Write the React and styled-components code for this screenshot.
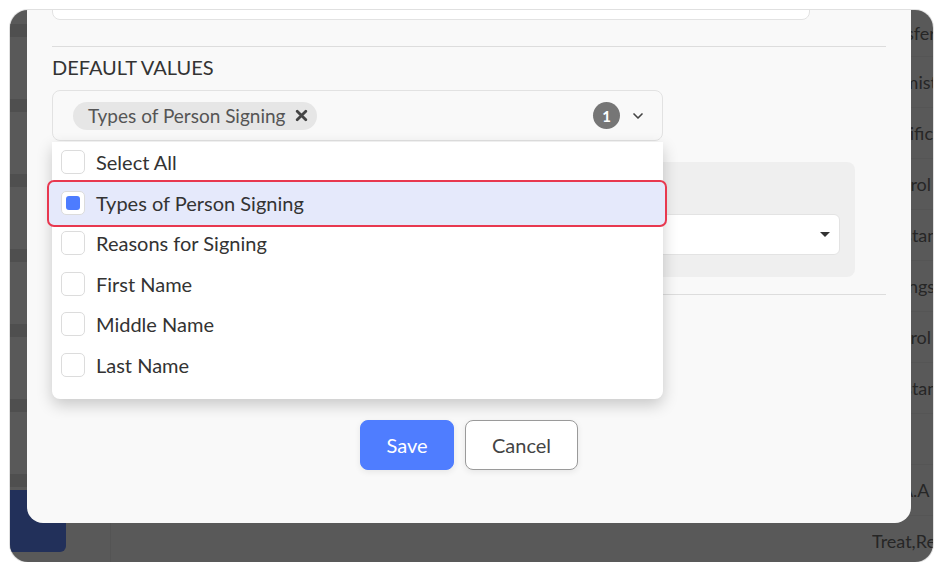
import React from 'react';
import styled, { createGlobalStyle } from 'styled-components';
import { ChevronDown } from 'lucide-react';

const GlobalStyle = createGlobalStyle`
  body {
    margin: 0;
    background: #ffffff;
    font-family: Lato, "Open Sans", sans-serif;
  }
`;

const Frame = styled.div`
  position: relative;
  box-sizing: border-box;
  width: 923px;
  height: 552px;
  margin: 10px 0 0 10px;
  border-radius: 18px;
  background: #595959;
  box-shadow: 0 0 0 1px #e0e0e0;
  overflow: hidden;
  display: grid;
  grid-template-columns: 56px 1fr;
`;

const Sidebar = styled.div`
  display: flex;
  flex-direction: column;
  padding-top: 14px;
`;

const SideRow = styled.div`
  box-sizing: border-box;
  height: ${({ $h }) => $h}px;
  border-top: 13px solid #4f4f4f;
  flex-shrink: 0;
`;

const SideButton = styled.div`
  height: 62px;
  margin-bottom: 15px;
  margin-top: auto;
  background: #22305a;
  border-radius: 0 0 6px 0;
`;

const Table = styled.div`
  display: flex;
  flex-direction: column;
  border-left: 1px solid #545454;
  margin-left: 44px;
`;

const TableRow = styled.div`
  box-sizing: border-box;
  height: ${({ $h }) => $h}px;
  flex-shrink: 0;
  display: grid;
  grid-template-columns: 1fr 61px;
  align-items: center;
  border-bottom: 1px solid #555555;
`;

const Cell = styled.div`
  font-size: 18px;
  color: #262626;
  white-space: nowrap;
  overflow: hidden;
`;

const Modal = styled.div`
  position: absolute;
  left: 17px;
  top: -40px;
  width: 884px;
  box-sizing: border-box;
  padding: 9px 25px 53px;
  background: #f9f9f9;
  border-radius: 16px;
  color: #333;
`;

const TopInput = styled.div`
  width: 758px;
  height: 41px;
  box-sizing: border-box;
  background: #ffffff;
  border: 1px solid #e2e2e2;
  border-radius: 8px;
`;

const Divider = styled.hr`
  margin: ${({ $top }) => $top}px 0 0;
  border: none;
  border-top: 1px solid #dddddd;
`;

const Label = styled.div`
  margin-top: 8px;
  font-size: 20px;
  line-height: 24px;
  color: #333;
  text-transform: uppercase;
`;

const Field = styled.div`
  position: relative;
  width: 611px;
  margin-top: 11px;
  z-index: 2;
`;

const Control = styled.div`
  height: 51px;
  box-sizing: border-box;
  border: 1px solid #e2e2e2;
  border-radius: 8px;
  background: #f9f9f9;
  display: flex;
  align-items: center;
  padding: 0 16px 0 20px;
`;

const Chip = styled.div`
  height: 28px;
  display: flex;
  align-items: center;
  gap: 10px;
  padding: 0 9px 0 15px;
  border-radius: 14px;
  background: #e6e6e6;
  font-size: 19px;
  color: #555;
`;

const Badge = styled.div`
  margin-left: auto;
  width: 27px;
  height: 27px;
  border-radius: 50%;
  background: #767676;
  color: #fff;
  font-size: 15px;
  font-weight: 700;
  display: grid;
  place-items: center;
`;

const Chevron = styled(ChevronDown)`
  margin-left: 10px;
  color: #444;
`;

const Menu = styled.div`
  position: absolute;
  left: 0;
  right: 0;
  top: calc(100% + 1px);
  background: #ffffff;
  border-radius: 0 0 8px 8px;
  box-shadow: 0 6px 16px rgba(0, 0, 0, 0.2);
  padding-bottom: 14px;
`;

const Option = styled.div`
  position: relative;
  height: 40.5px;
  display: flex;
  align-items: center;
  gap: 11px;
  padding-left: 9px;
  font-size: 20px;
  color: #333;

  ${({ $active }) =>
    $active &&
    `
    &::before {
      content: '';
      position: absolute;
      top: -3px;
      bottom: -4px;
      left: -5px;
      right: -4px;
      background: #e5e9fb;
      border: 2px solid #e8384f;
      border-radius: 7px;
    }
  `}
`;

const Box = styled.span`
  position: relative;
  width: 24px;
  height: 24px;
  box-sizing: border-box;
  border: 1px solid #dcdcdc;
  border-radius: 5px;
  background: #fff;
  display: grid;
  place-items: center;

  &::after {
    content: '';
    width: 14px;
    height: 14px;
    border-radius: 3px;
    background: ${({ $checked }) => ($checked ? '#4d7cff' : 'transparent')};
  }
`;

const OptionText = styled.span`
  position: relative;
`;

const Panel = styled.div`
  width: 803px;
  box-sizing: border-box;
  margin-top: 21px;
  padding: 14px 15px 22px;
  background: #efefef;
  border-radius: 8px;
`;

const PanelLabel = styled.div`
  height: 24px;
  margin-bottom: 14px;
  font-size: 18px;
  color: #555;
`;

const Select = styled.div`
  height: 41px;
  box-sizing: border-box;
  background: #fff;
  border: 1px solid #e3e3e3;
  border-radius: 6px;
  display: flex;
  align-items: center;
  justify-content: flex-end;
  padding-right: 9px;
`;

const Caret = styled.span`
  width: 0;
  height: 0;
  border-left: 5px solid transparent;
  border-right: 5px solid transparent;
  border-top: 5px solid #333;
`;

const Footer = styled.div`
  margin-top: 125px;
  display: flex;
  justify-content: center;
  gap: 11px;
`;

const Button = styled.button`
  height: 50px;
  width: ${({ $w }) => $w}px;
  border-radius: 8px;
  font-family: inherit;
  font-size: 20px;
  cursor: pointer;
  border: 1px solid ${({ $primary }) => ($primary ? '#4f7dff' : '#9a9a9a')};
  background: ${({ $primary }) => ($primary ? '#4f7dff' : '#ffffff')};
  color: ${({ $primary }) => ($primary ? '#ffffff' : '#444')};
  box-shadow: 0 2px 6px rgba(0, 0, 0, 0.08);
`;

const XIcon = () => (
  <svg width="13" height="13" viewBox="0 0 12 12">
    <path d="M2 2 L10 10 M10 2 L2 10" stroke="#444" strokeWidth="2.6" strokeLinecap="round" />
  </svg>
);

const options = [
  'Select All',
  'Types of Person Signing',
  'Reasons for Signing',
  'First Name',
  'Middle Name',
  'Last Name',
];

const rows = [
  { h: 47, text: 'Transfer' },
  { h: 51, text: 'Chemistry' },
  { h: 51, text: 'Specific' },
  { h: 51, text: 'Control' },
  { h: 51, text: 'Assistant' },
  { h: 51, text: 'Settings' },
  { h: 51, text: 'Control' },
  { h: 51, text: 'Assistant' },
  { h: 51, text: '' },
  { h: 51, text: 'SLPA.A and' },
  { h: 51, text: 'Treat,Reason' },
];

export default function App() {
  const selected = ['Types of Person Signing'];

  return (
    <>
      <GlobalStyle />
      <Frame>
        <Sidebar>
          {[0, 1, 2, 3, 4, 5].map((i) => (
            <SideRow key={i} $h={75} />
          ))}
          <SideRow $h={11} />
          <SideButton />
        </Sidebar>
        <Table>
          {rows.map((row, i) => (
            <TableRow key={i} $h={row.h}>
              <span />
              <Cell>{row.text}</Cell>
            </TableRow>
          ))}
        </Table>

        <Modal>
          <TopInput />
          <Divider $top={26} />
          <Label>Default Values</Label>
          <Field>
            <Control>
              {selected.map((s) => (
                <Chip key={s}>
                  {s}
                  <XIcon />
                </Chip>
              ))}
              <Badge>{selected.length}</Badge>
              <Chevron size={16} strokeWidth={2.5} />
            </Control>
            <Menu>
              {options.map((o) => {
                const checked = selected.includes(o);
                return (
                  <Option key={o} $active={checked}>
                    <Box $checked={checked} />
                    <OptionText>{o}</OptionText>
                  </Option>
                );
              })}
            </Menu>
          </Field>
          <Panel>
            <PanelLabel>Display As</PanelLabel>
            <Select>
              <Caret />
            </Select>
          </Panel>
          <Divider $top={17} />
          <Footer>
            <Button $primary $w={94}>Save</Button>
            <Button $w={113}>Cancel</Button>
          </Footer>
        </Modal>
      </Frame>
    </>
  );
}
